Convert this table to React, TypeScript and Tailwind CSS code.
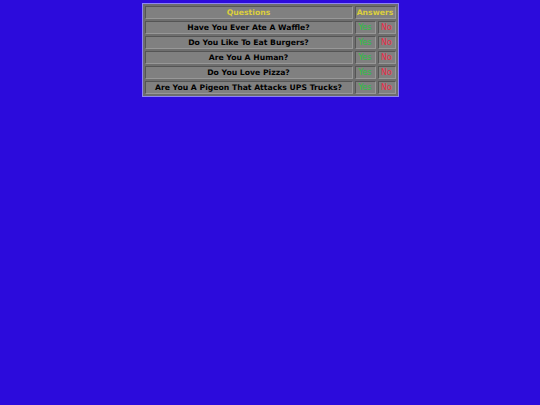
const rows = [
  "Have You Ever Ate A Waffle?",
  "Do You Like To Eat Burgers?",
  "Are You A Human?",
  "Do You Love Pizza?",
  "Are You A Pigeon That Attacks UPS Trucks?",
];

const cell = "border border-t-[#555555] border-l-[#555555] border-b-[#989898] border-r-[#989898] bg-[#808080] px-[1px] py-0 h-[13px] leading-[11px]";

export default function App() {
  return (
    <div className="min-h-[405px] bg-[#2c0bdc] pt-[3px] font-['DejaVu_Sans',sans-serif] text-[7.7px] font-bold">
      <table className="mx-auto border border-[#8f86f5] bg-[#6e6e6e] border-separate border-spacing-[2px]">
        <thead>
          <tr>
            <th className={`${cell} w-[208px] text-[#dccf3c]`}>Questions</th>
            <th colSpan={2} className={`${cell} text-[#dccf3c]`}>Answers</th>
          </tr>
        </thead>
        <tbody>
          {rows.map((q) => (
            <tr key={q}>
              <td className={`${cell} text-center text-black`}>{q}</td>
              <td className={`${cell} w-[21px] text-center text-[8px] font-normal text-[#26c43e]`}>Yes</td>
              <td className={`${cell} w-[18px] text-center text-[8px] font-normal text-[#ee2a48]`}>No</td>
            </tr>
          ))}
        </tbody>
      </table>
    </div>
  );
}
